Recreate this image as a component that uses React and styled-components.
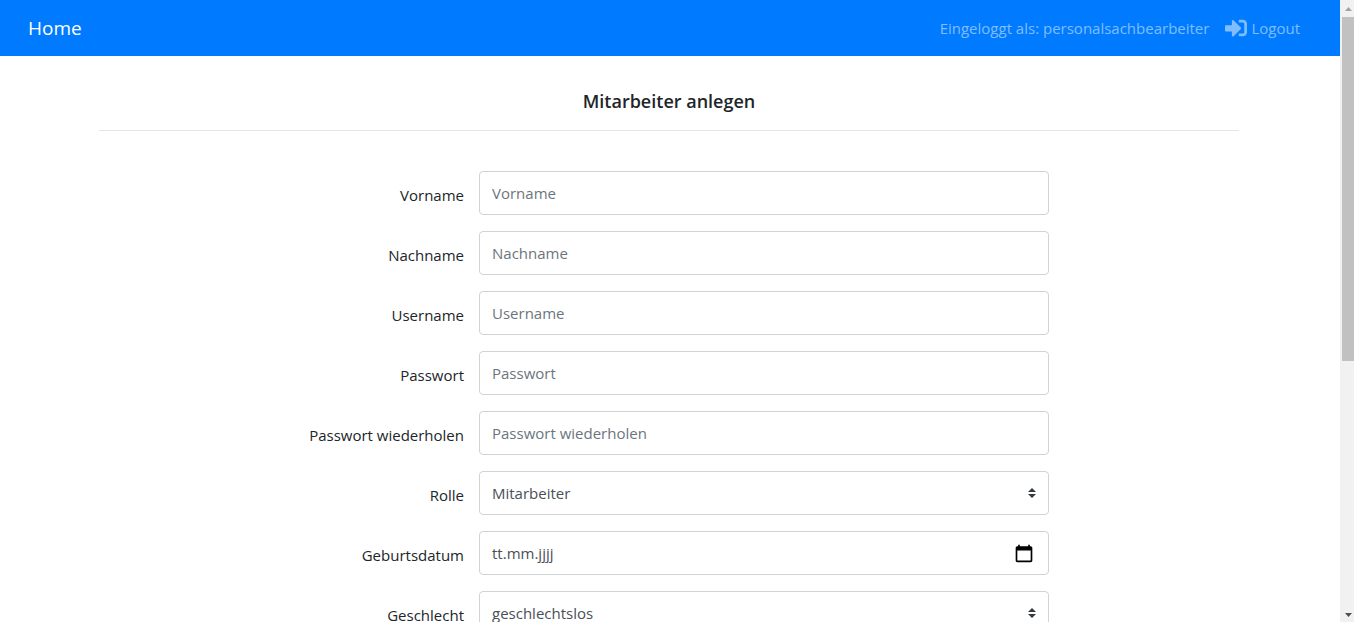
import React from 'react';
import styled, { createGlobalStyle } from 'styled-components';
import { FaSignInAlt } from 'react-icons/fa';

const GlobalStyle = createGlobalStyle`
  *, *::before, *::after { box-sizing: border-box; }
  body {
    margin: 0;
    background: #fff;
    color: #212529;
    font-family: "Open Sans", "Noto Sans", sans-serif;
    font-size: 15px;
    line-height: 24px;
  }
`;

const Shell = styled.div`
  display: flex;
  height: 100vh;
  overflow: hidden;
`;

const Page = styled.div`
  flex: 1;
  min-width: 0;
  overflow: hidden;
`;

const Navbar = styled.nav`
  display: flex;
  align-items: center;
  justify-content: space-between;
  height: 56px;
  padding: 0 40px 0 28px;
  background: #007bff;
`;

const Brand = styled.a`
  color: #fff;
  font-size: 19px;
  line-height: 30px;
  text-decoration: none;
`;

const NavItems = styled.div`
  display: flex;
  align-items: center;
  gap: 16px;
  color: rgba(255, 255, 255, 0.5);
`;

const LogoutLink = styled.a`
  display: flex;
  align-items: center;
  gap: 4px;
  color: inherit;
  text-decoration: none;
`;

const Content = styled.main`
  padding-right: 2px;
`;

const Container = styled.div`
  max-width: 1140px;
  margin: 0 auto;
`;

const Title = styled.h1`
  margin: 0;
  padding: 32px 0 16px;
  border-bottom: 1px solid #e5e5e5;
  font-size: 18px;
  font-weight: 600;
  line-height: 26px;
  text-align: center;
`;

const Form = styled.form`
  display: flex;
  flex-direction: column;
  gap: 16px;
  padding: 40px 0;
`;

const Row = styled.div`
  display: grid;
  grid-template-columns: 4fr 6fr 2fr;
  align-items: center;
`;

const Label = styled.label`
  padding: 4px 15px 0 0;
  text-align: right;
`;

const Field = styled.div`
  position: relative;
  display: flex;
  align-items: center;
  height: 44px;
  border: 1px solid #ced4da;
  border-radius: 4px;
  background: #fff;
`;

const Input = styled.input`
  flex: 1;
  min-width: 0;
  height: 100%;
  padding: 0 12px;
  border: 0;
  background: transparent;
  color: #495057;
  font: inherit;
  outline: none;

  &::placeholder {
    color: ${({ $dark }) => ($dark ? '#495057' : '#6c757d')};
    opacity: 1;
  }
`;

const Select = styled.select`
  flex: 1;
  height: 100%;
  padding: 0 28px 0 12px;
  border: 0;
  appearance: none;
  background: transparent;
  color: #495057;
  font: inherit;
  outline: none;
`;

const SelectArrows = styled.svg`
  position: absolute;
  top: 16px;
  right: 12px;
  width: 8px;
  height: 10px;
  pointer-events: none;
`;

const CalendarButton = styled.button`
  display: flex;
  margin: 0 14px 0 0;
  padding: 0;
  border: 0;
  background: none;
  color: #000;
`;

const ScrollTrack = styled.div`
  display: flex;
  flex-direction: column;
  align-items: flex-end;
  width: 14px;
  background: #f1f1f1;
`;

const ScrollThumb = styled.div`
  flex: 344;
  width: 12px;
  background: #c1c1c1;
`;

const ScrollRest = styled.div`
  flex: 244;
`;

const ScrollArrow = styled.svg`
  flex: none;
  width: 12px;
  height: 17px;
`;

const fields = [
  { id: 'vorname', label: 'Vorname', type: 'text' },
  { id: 'nachname', label: 'Nachname', type: 'text' },
  { id: 'username', label: 'Username', type: 'text' },
  { id: 'passwort', label: 'Passwort', type: 'password' },
  { id: 'passwort2', label: 'Passwort wiederholen', type: 'password' },
  { id: 'rolle', label: 'Rolle', type: 'select', option: 'Mitarbeiter' },
  { id: 'geburtsdatum', label: 'Geburtsdatum', type: 'date' },
  { id: 'geschlecht', label: 'Geschlecht', type: 'select', option: 'geschlechtslos' },
];

function Control({ field }) {
  if (field.type === 'select') {
    return (
      <Field>
        <Select id={field.id} defaultValue={field.option}>
          <option>{field.option}</option>
        </Select>
        <SelectArrows viewBox="0 0 4 5" aria-hidden="true">
          <path fill="#343a40" d="M2 0L0 2h4zm0 5L0 3h4z" />
        </SelectArrows>
      </Field>
    );
  }
  if (field.type === 'date') {
    return (
      <Field>
        <Input id={field.id} type="text" placeholder="tt.mm.jjjj" $dark />
        <CalendarButton type="button" aria-label="Kalender öffnen">
          <svg width="20" height="20" viewBox="0 0 24 24" aria-hidden="true">
            <path
              fill="currentColor"
              d="M20 4h-1V2h-2v2H7V2H5v2H4c-1.100 0-2 .9-2 2v15c0 1.100.9 2 2 2h16c1.100 0 2-.9 2-2V6c0-1.100-.9-2-2-2zm0 17H4V9h16v12z"
            />
          </svg>
        </CalendarButton>
      </Field>
    );
  }
  return (
    <Field>
      <Input id={field.id} type={field.type} placeholder={field.label} />
    </Field>
  );
}

export default function App() {
  return (
    <>
      <GlobalStyle />
      <Shell>
        <Page>
          <Navbar>
            <Brand href="#home">Home</Brand>
            <NavItems>
              <span>Eingeloggt als: personalsachbearbeiter</span>
              <LogoutLink href="#logout">
                <FaSignInAlt size={22} aria-hidden="true" />
                Logout
              </LogoutLink>
            </NavItems>
          </Navbar>
          <Content>
            <Container>
              <Title>Mitarbeiter anlegen</Title>
              <Form>
                {fields.map((field) => (
                  <Row key={field.id}>
                    <Label htmlFor={field.id}>{field.label}</Label>
                    <Control field={field} />
                  </Row>
                ))}
              </Form>
            </Container>
          </Content>
        </Page>
        <ScrollTrack aria-hidden="true">
          <ScrollArrow viewBox="0 0 12 17">
            <path fill="#a3a3a3" d="M3 11h7L6.500 7z" />
          </ScrollArrow>
          <ScrollThumb />
          <ScrollRest />
          <ScrollArrow viewBox="0 0 12 17">
            <path fill="#505050" d="M3 8h7l-3.500 4z" />
          </ScrollArrow>
        </ScrollTrack>
      </Shell>
    </>
  );
}
